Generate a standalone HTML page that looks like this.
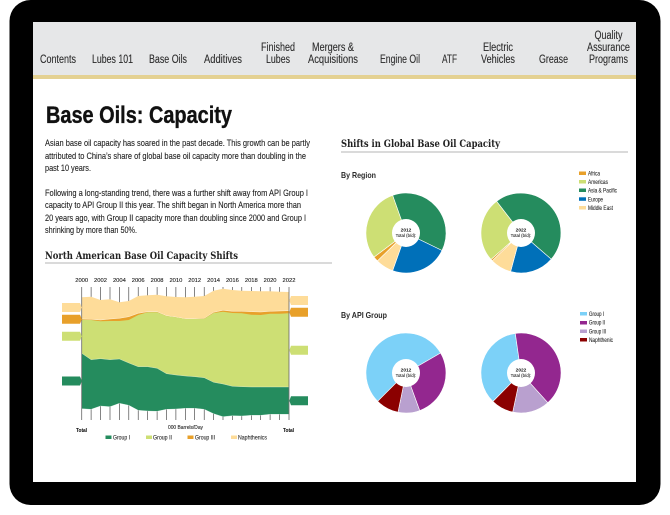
<!DOCTYPE html>
<html lang="en">
<head>
<meta charset="utf-8">
<title>Base Oils: Capacity</title>
<style>
html,body{margin:0;padding:0;background:#fff;width:670px;height:515px;overflow:hidden}
svg{display:block;filter:blur(.35px)}
text{font-family:"Liberation Sans",sans-serif;fill:#222}
.nav{font-size:11.5px;fill:#2d2d2d;stroke:#2d2d2d;stroke-width:.12}
.p{font-size:9.2px;fill:#222;stroke:#222;stroke-width:.1}
.h{font-family:"DejaVu Serif","Liberation Serif",serif;font-weight:700;font-size:10.4px;fill:#222}
.b{font-weight:700;font-size:8.4px;fill:#2a2a2a}
.y{font-size:5.8px;fill:#111;stroke:#111;stroke-width:.08}
.l{font-size:6px;fill:#222;stroke:#222;stroke-width:.08}
.c1{font-size:4.8px;font-weight:700;fill:#111}
.c2{font-size:4.4px;fill:#111;stroke:#111;stroke-width:.06}
.w path{stroke:#fff;stroke-width:.6}
</style>
</head>
<body>
<svg width="670" height="515" viewBox="0 0 670 515" xmlns="http://www.w3.org/2000/svg">
<rect width="670" height="515" fill="#fff"/>
<rect x="9.5" y="0" width="651" height="505" rx="21" fill="#000"/>
<rect x="33" y="22" width="603" height="460" fill="#fff"/>
<rect x="33" y="22" width="603" height="53" fill="#e6e7e8"/>
<rect x="33" y="75" width="603" height="4" fill="#e4d192"/>

<g class="nav" text-anchor="middle">
<text class="nav" x="58" y="63" textLength="36" lengthAdjust="spacingAndGlyphs">Contents</text>
<text class="nav" x="112.5" y="63" textLength="41" lengthAdjust="spacingAndGlyphs">Lubes 101</text>
<text class="nav" x="168" y="63" textLength="38" lengthAdjust="spacingAndGlyphs">Base Oils</text>
<text class="nav" x="223" y="63" textLength="38" lengthAdjust="spacingAndGlyphs">Additives</text>
<text class="nav" x="278" y="51" textLength="34" lengthAdjust="spacingAndGlyphs">Finished</text>
<text class="nav" x="278" y="63" textLength="24" lengthAdjust="spacingAndGlyphs">Lubes</text>
<text class="nav" x="333" y="51" textLength="42" lengthAdjust="spacingAndGlyphs">Mergers &amp;</text>
<text class="nav" x="333" y="63" textLength="50" lengthAdjust="spacingAndGlyphs">Acquisitions</text>
<text class="nav" x="400" y="63" textLength="40" lengthAdjust="spacingAndGlyphs">Engine Oil</text>
<text class="nav" x="449.5" y="63" textLength="15" lengthAdjust="spacingAndGlyphs">ATF</text>
<text class="nav" x="498" y="51" textLength="30" lengthAdjust="spacingAndGlyphs">Electric</text>
<text class="nav" x="498" y="63" textLength="34" lengthAdjust="spacingAndGlyphs">Vehicles</text>
<text class="nav" x="553.5" y="63" textLength="29" lengthAdjust="spacingAndGlyphs">Grease</text>
<text class="nav" x="608.5" y="39" textLength="28" lengthAdjust="spacingAndGlyphs">Quality</text>
<text class="nav" x="608.5" y="51" textLength="43" lengthAdjust="spacingAndGlyphs">Assurance</text>
<text class="nav" x="608.5" y="63" textLength="39" lengthAdjust="spacingAndGlyphs">Programs</text>
</g>

<text x="46" y="123" font-size="24" font-weight="700" style="fill:#111;stroke:#111;stroke-width:.35" textLength="186" lengthAdjust="spacingAndGlyphs">Base Oils: Capacity</text>

<text class="p" x="45" y="146" textLength="265" lengthAdjust="spacingAndGlyphs">Asian base oil capacity has soared in the past decade. This growth can be partly</text>
<text class="p" x="45" y="159" textLength="261" lengthAdjust="spacingAndGlyphs">attributed to China’s share of global base oil capacity more than doubling in the</text>
<text class="p" x="45" y="171" textLength="46" lengthAdjust="spacingAndGlyphs">past 10 years.</text>
<text class="p" x="45" y="196" textLength="263" lengthAdjust="spacingAndGlyphs">Following a long-standing trend, there was a further shift away from API Group I</text>
<text class="p" x="45" y="208" textLength="256" lengthAdjust="spacingAndGlyphs">capacity to API Group II this year. The shift began in North America more than</text>
<text class="p" x="45" y="221" textLength="261" lengthAdjust="spacingAndGlyphs">20 years ago, with Group II capacity more than doubling since 2000 and Group I</text>
<text class="p" x="45" y="233" textLength="92" lengthAdjust="spacingAndGlyphs">shrinking by more than 50%.</text>

<text class="h" x="45" y="259" textLength="193" lengthAdjust="spacingAndGlyphs">North American Base Oil Capacity Shifts</text>
<rect x="45" y="262.5" width="287" height="1" fill="#b5b5b5"/>

<text class="h" x="341" y="147" textLength="159" lengthAdjust="spacingAndGlyphs">Shifts in Global Base Oil Capacity</text>
<rect x="341" y="151.5" width="287" height="1" fill="#b5b5b5"/>

<text class="b" x="341" y="178" textLength="35" lengthAdjust="spacingAndGlyphs">By Region</text>
<text class="b" x="341" y="318" textLength="46" lengthAdjust="spacingAndGlyphs">By API Group</text>

<!-- Area chart -->
<g text-anchor="middle">
<text class="y" x="81.7" y="282">2000</text><text class="y" x="100.5" y="282">2002</text><text class="y" x="119.4" y="282">2004</text><text class="y" x="138.2" y="282">2006</text><text class="y" x="157.1" y="282">2008</text><text class="y" x="175.9" y="282">2010</text><text class="y" x="194.7" y="282">2012</text><text class="y" x="213.6" y="282">2014</text><text class="y" x="232.4" y="282">2016</text><text class="y" x="251.3" y="282">2018</text><text class="y" x="270.1" y="282">2020</text><text class="y" x="289" y="282">2022</text>
</g>
<path stroke="#333" stroke-width=".6" fill="none" d="M91.1 287V420M100.5 287V420M110 287V420M119.4 287V420M128.8 287V420M138.2 287V420M147.6 287V420M157.1 287V420M166.5 287V420M175.9 287V420M185.3 287V420M194.7 287V420M204.2 287V420M213.6 287V420M223 287V420M232.4 287V420M241.8 287V420M251.3 287V420M260.7 287V420M270.1 287V420M279.5 287V420"/>

<path fill="#fedc99" d="M81.7 297.3L91.1 296.7L100.5 300L110 299.3L119.4 302.3L128.8 301L138.2 296L147.6 295.3L157.1 294.7L166.5 296.3L175.9 297L185.3 297.3L194.7 296.7L204.2 296L213.6 290.7L223 288.7L232.4 290L241.8 290.7L251.3 291L260.7 291.3L270.1 291.3L279.5 291.7L289 292V400H81.7Z"/>
<path fill="#e8a02a" stroke="#fff" stroke-width=".4" d="M81.7 319L91.1 319.3L100.5 320L110 319L119.4 318.3L128.8 316.7L138.2 313.3L147.6 311.7L157.1 311.7L166.5 315.7L175.9 317L185.3 318.7L194.7 318.7L204.2 318.3L213.6 312.3L223 310.3L232.4 311.3L241.8 311.3L251.3 311.7L260.7 312L270.1 311.3L279.5 311L289 310.7V400H81.7Z"/>
<path fill="#cddf74" d="M81.7 319.7L91.1 320L100.5 321.3L110 321L119.4 321L128.8 320L138.2 315L147.6 312.3L157.1 312.3L166.5 316L175.9 317.3L185.3 319L194.7 319L204.2 318.7L213.6 313L223 311.7L232.4 313L241.8 313.3L251.3 314.7L260.7 315L270.1 313.7L279.5 313.7L289 313.3V400H81.7Z"/>
<path fill="#258c5e" stroke="#fff" stroke-width=".3" d="M81.7 353.3L91.1 359.7L100.5 358.7L110 359.7L119.4 359L128.8 363L138.2 366.7L147.6 366.7L157.1 368.3L166.5 373.7L175.9 375L185.3 376L194.7 376.7L204.2 377.7L213.6 382.3L223 384L232.4 386.3L241.8 386.7L251.3 387L260.7 387L270.1 387L279.5 387L289 387V414.3L279.5 414.3L270.1 414.3L260.7 415.3L251.3 415.3L241.8 416L232.4 415.7L223 416.7L213.6 413.7L204.2 409.3L194.7 408.3L185.3 408.3L175.9 409L166.5 409.3L157.1 411.3L147.6 411L138.2 410.3L128.8 405.3L119.4 403.3L110 406.7L100.5 406L91.1 409.3L81.7 408.7Z"/>
<path stroke="#666" stroke-width=".8" fill="none" d="M81.7 287V420M289 287V420"/>

<!-- side tags -->
<path fill="#fedc99" d="M62 303H80L82 307.5L80 312H62Z"/>
<path fill="#e8a02a" d="M62 314.7H80L82 319.2L80 323.7H62Z"/>
<path fill="#cddf74" d="M62 331.7H80L82 336.2L80 340.7H62Z"/>
<path fill="#258c5e" d="M62 376.5H80L82 381L80 385.5H62Z"/>
<path fill="#fedc99" d="M308 296H291L289.3 300.5L291 305H308Z"/>
<path fill="#e8a02a" d="M308 307.7H291L289.3 312.2L291 316.7H308Z"/>
<path fill="#cddf74" d="M308 345.7H291L289.3 350.2L291 354.7H308Z"/>
<path fill="#258c5e" d="M308 396.3H291L289.3 400.8L291 405.3H308Z"/>

<text class="y" x="76" y="432" font-weight="700" textLength="11" lengthAdjust="spacingAndGlyphs">Total</text>
<text class="y" x="283" y="432" font-weight="700" textLength="11" lengthAdjust="spacingAndGlyphs">Total</text>
<text class="y" x="168" y="429" textLength="35" lengthAdjust="spacingAndGlyphs">000 Barrels/Day</text>

<rect x="105.5" y="435.5" width="6" height="3.5" fill="#258c5e"/><text class="l" x="113" y="439.5" textLength="17" lengthAdjust="spacingAndGlyphs">Group I</text>
<rect x="146" y="435.5" width="6" height="3.5" fill="#cddf74"/><text class="l" x="153" y="439.5" textLength="19" lengthAdjust="spacingAndGlyphs">Group II</text>
<rect x="187.5" y="435.5" width="6" height="3.5" fill="#e8a02a"/><text class="l" x="195" y="439.5" textLength="20" lengthAdjust="spacingAndGlyphs">Group III</text>
<rect x="231" y="435.5" width="6" height="3.5" fill="#fedc99"/><text class="l" x="238" y="439.5" textLength="29" lengthAdjust="spacingAndGlyphs">Naphthenics</text>

<!-- Donut 1 -->
<g class="w">
<path fill="#258c5e" d="M406 233L392.6 195.3A40 40 0 0 1 442 250.5Z"/>
<path fill="#0070b9" d="M406 233L442 250.5A40 40 0 0 1 392.6 270.7Z"/>
<path fill="#fedc99" d="M406 233L392.6 270.7A40 40 0 0 1 377.4 260.9Z"/>
<path fill="#e8a02a" d="M406 233L377.4 260.9A40 40 0 0 1 374 257.1Z"/>
<path fill="#cddf74" d="M406 233L374 257.1A40 40 0 0 1 392.6 195.3Z"/>
</g>
<circle cx="406" cy="233" r="14" fill="#fff"/>
<text class="c1" x="406" y="231.5" text-anchor="middle">2012</text>
<text class="c2" x="406" y="237" text-anchor="middle">Total (b/d):</text>

<!-- Donut 2 -->
<g class="w">
<path fill="#258c5e" d="M521 233L496.6 201.3A40 40 0 0 1 551.2 259.2Z"/>
<path fill="#0070b9" d="M521 233L551.2 259.2A40 40 0 0 1 510.6 271.6Z"/>
<path fill="#fedc99" d="M521 233L510.6 271.6A40 40 0 0 1 492.2 260.8Z"/>
<path fill="#e8a02a" d="M521 233L492.2 260.8A40 40 0 0 1 491 259.5Z"/>
<path fill="#cddf74" d="M521 233L491 259.5A40 40 0 0 1 496.6 201.3Z"/>
</g>
<circle cx="521" cy="233" r="14" fill="#fff"/>
<text class="c1" x="521" y="231.5" text-anchor="middle">2022</text>
<text class="c2" x="521" y="237" text-anchor="middle">Total (b/d):</text>

<!-- Donut 3 -->
<g class="w">
<path fill="#7cd1f8" d="M406 373L377.7 401.3A40 40 0 1 1 440.6 353Z"/>
<path fill="#93278f" d="M406 373L440.6 353A40 40 0 0 1 419.7 410.6Z"/>
<path fill="#b9a0cf" d="M406 373L419.7 410.6A40 40 0 0 1 398 412.2Z"/>
<path fill="#8b0000" d="M406 373L398 412.2A40 40 0 0 1 377.7 401.3Z"/>
</g>
<circle cx="406" cy="373" r="14" fill="#fff"/>
<text class="c1" x="406" y="371.5" text-anchor="middle">2012</text>
<text class="c2" x="406" y="377" text-anchor="middle">Total (b/d):</text>

<!-- Donut 4 -->
<g class="w">
<path fill="#7cd1f8" d="M521 373L492.9 401.5A40 40 0 0 1 515.3 333.4Z"/>
<path fill="#93278f" d="M521 373L515.3 333.4A40 40 0 0 1 547.8 402.7Z"/>
<path fill="#b9a0cf" d="M521 373L547.8 402.7A40 40 0 0 1 512.7 412.1Z"/>
<path fill="#8b0000" d="M521 373L512.7 412.1A40 40 0 0 1 492.9 401.5Z"/>
</g>
<circle cx="521" cy="373" r="14" fill="#fff"/>
<text class="c1" x="521" y="371.5" text-anchor="middle">2022</text>
<text class="c2" x="521" y="377" text-anchor="middle">Total (b/d):</text>

<!-- Legends -->
<rect x="579" y="171.5" width="7" height="3.5" fill="#e8a02a"/><text class="l" x="588" y="175.3" textLength="12" lengthAdjust="spacingAndGlyphs">Africa</text>
<rect x="579" y="180" width="7" height="3.5" fill="#cddf74"/><text class="l" x="588" y="184" textLength="20" lengthAdjust="spacingAndGlyphs">Americas</text>
<rect x="579" y="188.5" width="7" height="3.5" fill="#258c5e"/><text class="l" x="588" y="192.6" textLength="29" lengthAdjust="spacingAndGlyphs">Asia &amp; Pacific</text>
<rect x="579" y="197.3" width="7" height="3.5" fill="#0070b9"/><text class="l" x="588" y="201.3" textLength="15" lengthAdjust="spacingAndGlyphs">Europe</text>
<rect x="579" y="206" width="7" height="3.5" fill="#fedc99"/><text class="l" x="588" y="210" textLength="25" lengthAdjust="spacingAndGlyphs">Middle East</text>

<rect x="580" y="312" width="7" height="3.5" fill="#7cd1f8"/><text class="l" x="589" y="316" textLength="15" lengthAdjust="spacingAndGlyphs">Group I</text>
<rect x="580" y="321" width="7" height="3.5" fill="#93278f"/><text class="l" x="589" y="324.7" textLength="16" lengthAdjust="spacingAndGlyphs">Group II</text>
<rect x="580" y="329.5" width="7" height="3.5" fill="#b9a0cf"/><text class="l" x="589" y="333.3" textLength="17" lengthAdjust="spacingAndGlyphs">Group III</text>
<rect x="580" y="338" width="7" height="3.5" fill="#8b0000"/><text class="l" x="589" y="342" textLength="24" lengthAdjust="spacingAndGlyphs">Naphthenic</text>
</svg>
</body>
</html>
